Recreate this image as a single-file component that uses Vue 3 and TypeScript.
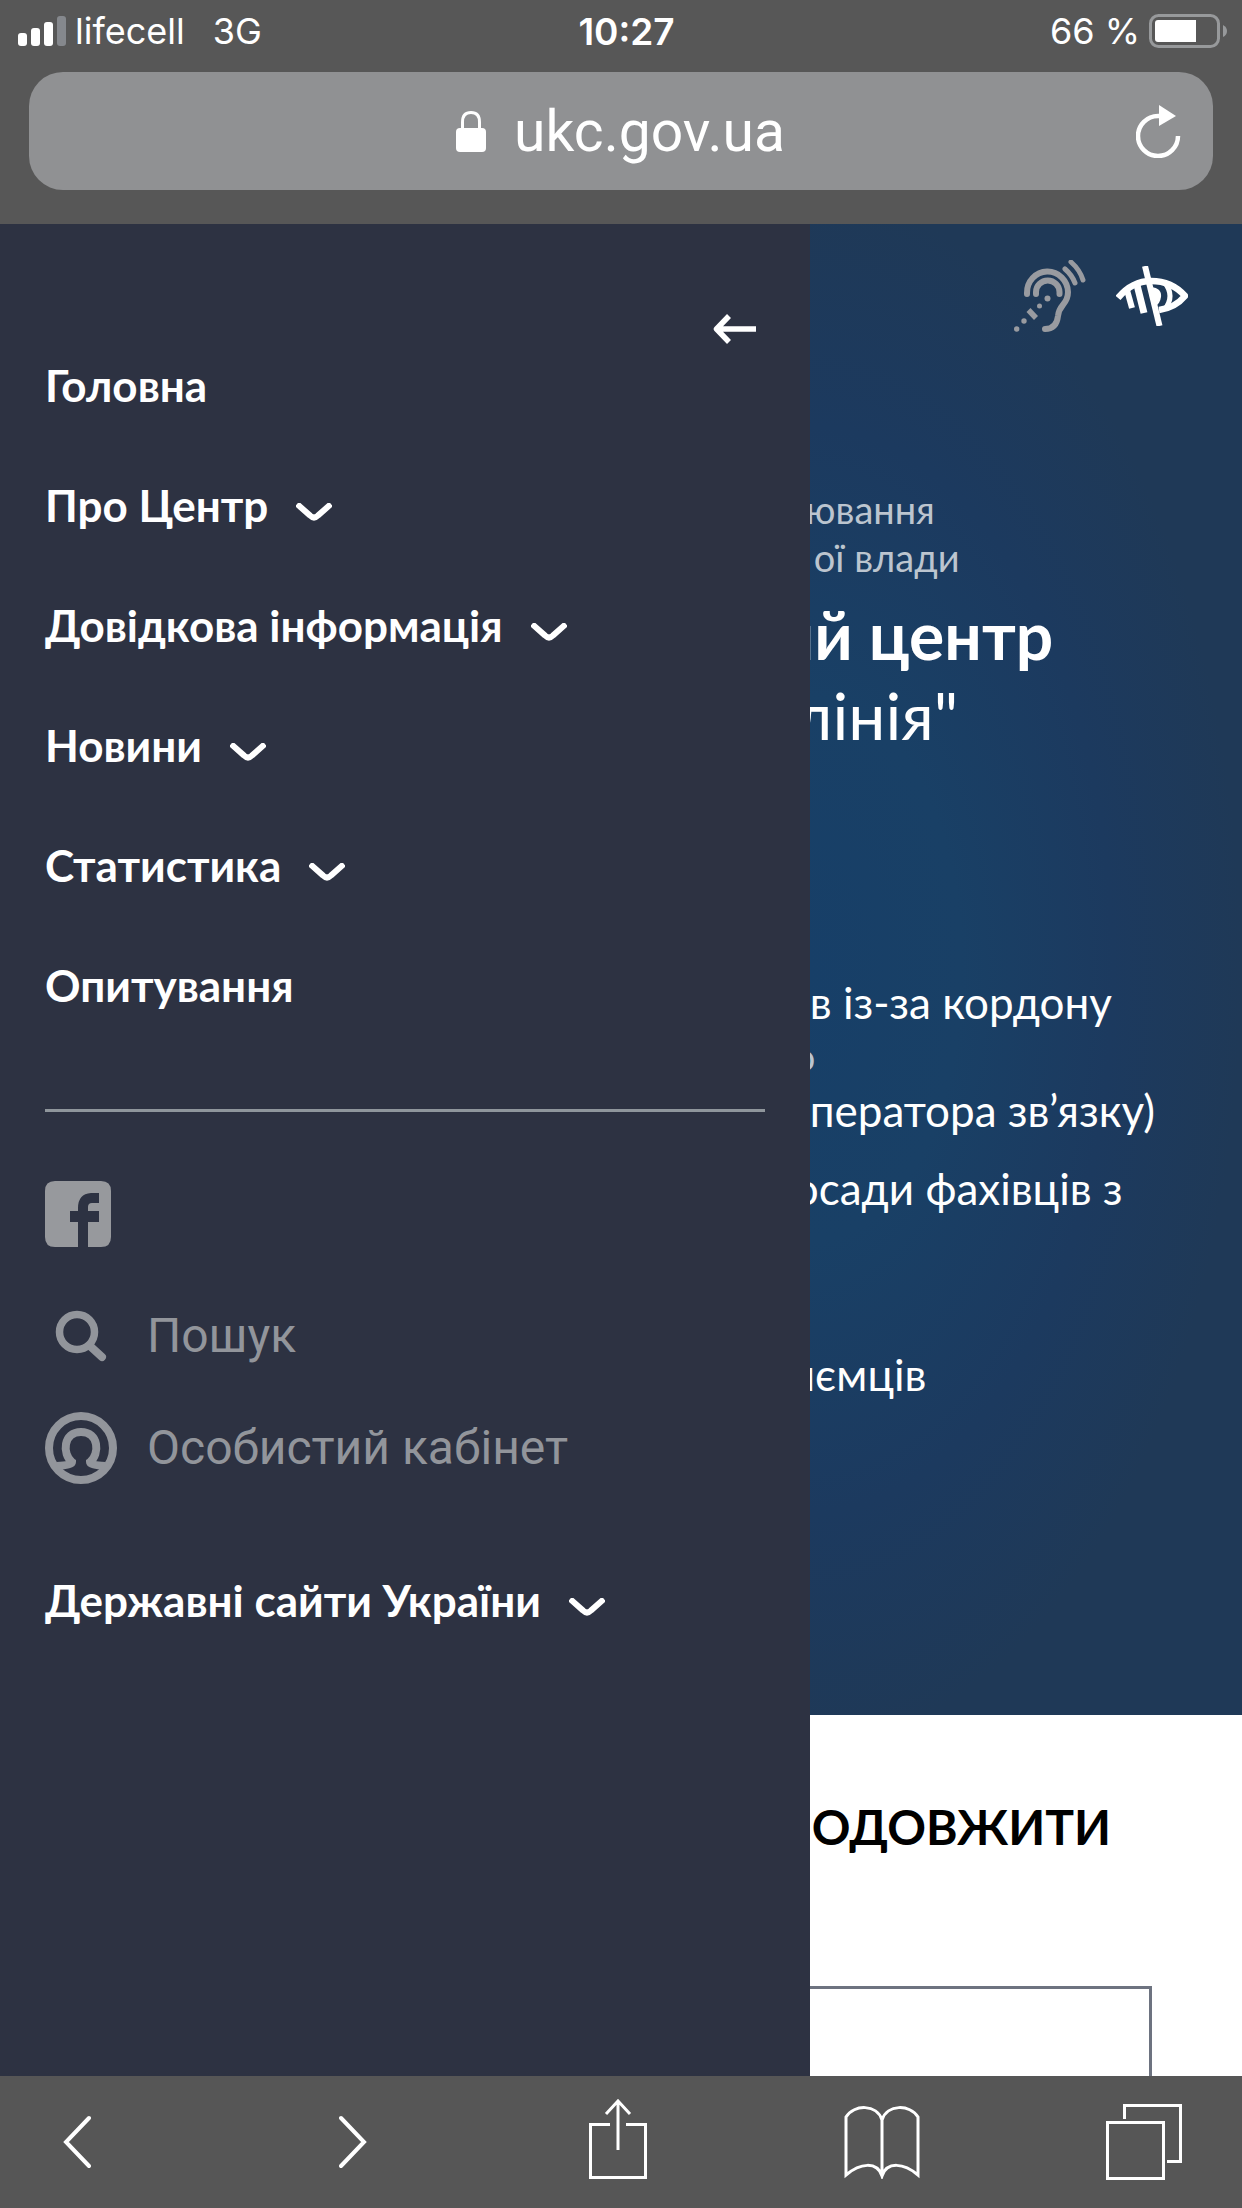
<script setup lang="ts">
interface MenuItem {
  label: string
  expandable: boolean
}

const menu: MenuItem[] = [
  { label: 'Головна', expandable: false },
  { label: 'Про Центр', expandable: true },
  { label: 'Довідкова інформація', expandable: true },
  { label: 'Новини', expandable: true },
  { label: 'Статистика', expandable: true },
  { label: 'Опитування', expandable: false },
]
</script>

<template>
  <div class="screen">
    <header class="chrome">
      <div class="status">
        <div class="carrier">
          <svg width="48" height="30" viewBox="0 0 48 30" aria-hidden="true">
            <rect x="0" y="17" width="9" height="13" rx="3" fill="#fff" />
            <rect x="13" y="12" width="9" height="18" rx="3" fill="#fff" />
            <rect x="26" y="6" width="9" height="24" rx="3" fill="#fff" />
            <rect x="39" y="0" width="9" height="30" rx="3" fill="#85888d" />
          </svg>
          <span>lifecell</span>
          <span class="network">3G</span>
        </div>
        <time class="clock">10:27</time>
        <div class="power">
          <span>66 %</span>
          <svg width="78" height="34" viewBox="0 0 78 34" aria-hidden="true">
            <rect x="1.5" y="1.5" width="68" height="31" rx="8" fill="none" stroke="#97999b" stroke-width="3" />
            <path d="M9 6H47V28H9Q6 28 6 25V9Q6 6 9 6Z" fill="#fff" />
            <path d="M74 11Q78 13 78 17T74 23Z" fill="#97999b" />
          </svg>
        </div>
      </div>
      <div class="address">
        <div class="host">
          <svg width="30" height="41" viewBox="0 0 30 41" aria-hidden="true">
            <path d="M6.5 18V11Q6.5 1.500 15 1.500T23.500 11V18" fill="none" stroke="#fff" stroke-width="3" />
            <rect y="17" width="30" height="24" rx="4" fill="#fff" />
          </svg>
          <span>ukc.gov.ua</span>
        </div>
        <button class="reload" type="button" aria-label="Оновити">
          <svg width="46" height="54" viewBox="0 0 46 54">
            <path d="M42 32A20 20 0 1 1 22 12H25" fill="none" stroke="#fff" stroke-width="4.500" />
            <path d="M23 1L40 12L23 22Z" fill="#fff" />
          </svg>
        </button>
      </div>
    </header>

    <div class="viewport">
      <aside class="drawer">
        <button class="close" type="button" aria-label="Закрити меню">
          <svg width="43" height="30" viewBox="0 0 43 30">
            <path d="M43 15H4M16 2L3.500 15L16 28" fill="none" stroke="#fff" stroke-width="5.500" stroke-linejoin="round" />
          </svg>
        </button>
        <nav class="menu">
          <a v-for="item in menu" :key="item.label" class="entry" href="#">
            {{ item.label }}
            <svg v-if="item.expandable" class="chevron" viewBox="0 0 36 18" aria-hidden="true">
              <path d="M1 1L14 12.500Q18 16.500 22 12.500L35 1" />
            </svg>
          </a>
        </nav>
        <hr class="rule" />
        <a class="social" href="#" aria-label="Facebook">
          <svg width="66" height="66" viewBox="0 0 66 66">
            <path
              fill-rule="evenodd"
              d="M10 0H56Q66 0 66 10V56Q66 66 56 66H43V41H54V30H43V26Q43 22 47 22H54V12H46Q33 13 33 27V30H25V41H33V66H10Q0 66 0 56V10Q0 0 10 0Z"
              fill="#97999d"
            />
          </svg>
        </a>
        <div class="tools">
          <a class="tool" href="#">
            <svg width="72" height="72" viewBox="0 0 72 72" fill="none" stroke="#92959b" aria-hidden="true">
              <circle cx="32" cy="32" r="17.500" stroke-width="7.500" />
              <path d="M45 46L57 57" stroke-width="8" stroke-linecap="round" />
            </svg>
            Пошук
          </a>
          <a class="tool" href="#">
            <svg width="72" height="72" viewBox="0 0 72 72" fill="none" stroke="#92959b" stroke-width="8" aria-hidden="true">
              <circle cx="36" cy="36" r="32" />
              <path d="M12 54Q27 53 27 50C17 42 18 20 36 20S55 42 45 50Q45 53 60 54" />
            </svg>
            Особистий кабінет
          </a>
        </div>
        <a class="entry" href="#">
          Державні сайти України
          <svg class="chevron" viewBox="0 0 36 18" aria-hidden="true">
            <path d="M1 1L14 12.500Q18 16.500 22 12.500L35 1" />
          </svg>
        </a>
      </aside>

      <main class="page">
        <section class="hero">
          <div class="access">
            <button type="button" aria-label="Людям із порушенням слуху">
              <svg width="72" height="72" viewBox="0 0 72 72" fill="none" stroke="#999ba0" stroke-width="6" stroke-linecap="round">
                <path d="M13 34V33A20.500 21 0 0 1 54 32C54 45 45 44 44 56C43 65 38 69 31 69" />
                <path d="M22 34V32A11.700 11.500 0 0 1 45.500 32V34" />
                <path d="M51 9Q58 15 61 23M57 2Q66 10 69 20" stroke-width="5" />
                <path d="M14.500 50L22 58" stroke-width="5.500" stroke-linecap="butt" />
                <g fill="#999ba0" stroke="none">
                  <circle cx="33.500" cy="38.500" r="3" />
                  <circle cx="25.500" cy="46" r="2.500" />
                  <circle cx="10" cy="61" r="2.700" />
                  <circle cx="2.700" cy="69" r="2.700" />
                </g>
              </svg>
            </button>
            <button type="button" aria-label="Людям із порушенням зору">
              <svg width="72" height="60" viewBox="0 0 72 60" fill="none" stroke="#fff">
                <path d="M2 32Q16 15 35 15Q56 15 69 30Q59 42 43 44" stroke-width="6.500" stroke-linejoin="round" />
                <path d="M49 17Q59 30 49 43" stroke-width="5" />
                <path d="M35 21Q46 22 45 31Q44 38 39 40Z" fill="#fff" stroke="none" />
                <path d="M11 24L16 42" stroke-width="6" />
                <path d="M21 19L28 47" stroke-width="7" />
                <path d="M29 0L43.500 60" stroke-width="6" />
              </svg>
            </button>
          </div>
          <p class="caption"><span class="cut-xs">ювання</span><br />ої влади</p>
          <h1 class="title">
            <span class="cut-l">ий центр</span><br />
            <span class="subtitle cut-s">лінія"</span>
          </h1>
          <div class="notes">
            <p>в із-за кордону</p>
            <p class="minor"><span class="cut-s">о</span></p>
            <p>ператора зв’язку)</p>
            <p class="spaced"><span class="cut-s">осади фахівців з</span></p>
            <p class="last"><span class="cut-m">иємців</span></p>
          </div>
        </section>
        <section class="form">
          <h2>ОДОВЖИТИ</h2>
          <div class="panel"></div>
        </section>
      </main>
    </div>

    <footer class="toolbar">
      <button type="button" aria-label="Назад">
        <svg width="28" height="54" viewBox="0 0 28 54"><path d="M26 3L3 27L26 51" stroke-width="4" stroke-linecap="round" /></svg>
      </button>
      <button type="button" aria-label="Вперед">
        <svg width="28" height="54" viewBox="0 0 28 54"><path d="M2 3L25 27L2 51" stroke-width="4" stroke-linecap="round" /></svg>
      </button>
      <button type="button" aria-label="Поділитися">
        <svg width="58" height="86" viewBox="0 0 58 86"><path d="M21 25.500H1.500V78.500H56.500V25.500H37M29 51V3M17 15L29 2L41 15" /></svg>
      </button>
      <button type="button" aria-label="Закладки">
        <svg width="76" height="74" viewBox="0 0 76 74">
          <path d="M38 15C33 -1 10 -1 2 12V70C16 58 33 56 38 71C43 56 60 58 74 70V12C66 -1 43 -1 38 15V71" />
        </svg>
      </button>
      <button type="button" aria-label="Вкладки">
        <svg width="76" height="76" viewBox="0 0 76 76">
          <path d="M1.500 18.500H57.500V74.500H1.500ZM18.500 15V1.500H74.500V57.500H61" />
        </svg>
      </button>
    </footer>
  </div>
</template>

<style>
body {
  margin: 0;
}
</style>

<style scoped>
.screen {
  display: flex;
  flex-direction: column;
  min-height: 100vh;
  font-family: Lato, "Open Sans", sans-serif;
  color: #fff;
  background: #565656;
}

button {
  padding: 0;
  border: 0;
  background: none;
  color: inherit;
}

svg {
  display: block;
  flex: none;
}

a {
  color: inherit;
  text-decoration: none;
}

h1,
h2,
p {
  margin: 0;
}

.chrome {
  padding-bottom: 34px;
  background: #575757;
}

.status {
  display: grid;
  grid-template-columns: 1fr auto 1fr;
  align-items: center;
  height: 62px;
  padding: 0 15px 0 18px;
  font: 36px Inter, sans-serif;
}

.carrier,
.power {
  display: flex;
  align-items: center;
  gap: 9px;
}

.power {
  justify-content: flex-end;
}

.network {
  margin-left: 19px;
}

.clock {
  padding-left: 8px;
  font-size: 37px;
  font-weight: 600;
}

.address {
  display: flex;
  align-items: center;
  margin: 10px 29px 0;
  padding-right: 31px;
  height: 118px;
  border-radius: 34px;
  background: #909193;
}

.host {
  flex: 1;
  display: flex;
  justify-content: center;
  align-items: center;
  gap: 28px;
  padding-left: 76px;
  font: 57px Roboto, sans-serif;
}

.viewport {
  flex: 1;
  display: flex;
}

.drawer {
  flex: none;
  box-sizing: border-box;
  width: 65.2%;
  padding: 90px 45px;
  background: #2d3242;
}

.close {
  display: block;
  margin: 0 9px 13px auto;
}

.menu {
  display: flex;
  flex-direction: column;
  gap: 64px;
}

.entry {
  display: flex;
  align-items: center;
  gap: 28px;
  font-size: 44px;
  font-weight: 700;
  line-height: 56px;
}

.chevron {
  width: 36px;
  height: 18px;
  margin-top: 14px;
  fill: none;
  stroke: #fff;
  stroke-width: 6;
}

.rule {
  height: 3px;
  margin: 96px 0 69px;
  border: 0;
  background: #8f969c;
}

.social {
  display: block;
  width: 66px;
}

.tools {
  display: grid;
  gap: 40px;
  margin: 53px 0 88px;
}

.tool {
  display: flex;
  align-items: center;
  gap: 30px;
  font: 48px/72px Roboto, sans-serif;
  color: #92959b;
}

.page {
  flex: 1;
  min-width: 0;
  display: flex;
  flex-direction: column;
  overflow: hidden;
  white-space: nowrap;
  background: #fff;
}

.hero {
  padding: 36px 0 314px;
  background: radial-gradient(ellipse 100% 52% at 0 50%, #173f68 0%, #194066 35%, #1c3a5f 70%, #1f3957 100%);
}

.access {
  display: flex;
  justify-content: flex-end;
  align-items: center;
  gap: 30px;
  padding-right: 54px;
}

.caption {
  margin-top: 153px;
  padding-left: 4px;
  font-size: 38px;
  line-height: 48px;
  color: #bcc5cf;
}

.title {
  margin-top: 14px;
  font-size: 66px;
  font-weight: 700;
  line-height: 80px;
}

.subtitle {
  font-weight: 400;
}

.cut-xs {
  margin-left: -8px;
}

.cut-s {
  margin-left: -16px;
}

.cut-m {
  margin-left: -20px;
}

.cut-l {
  margin-left: -34px;
}

.notes {
  margin-top: 220px;
  font-size: 44px;
  line-height: 54px;
}

.minor {
  font-size: 38px;
  color: #bcc5cf;
}

.spaced {
  margin-top: 24px;
}

.last {
  margin-top: 132px;
}

.form {
  flex: 1;
  display: flex;
  flex-direction: column;
  color: #000;
}

.form h2 {
  margin: 84px 0 131px;
  padding-left: 2px;
  font-size: 48px;
  font-weight: 700;
  line-height: 56px;
}

.panel {
  flex: 1;
  margin-right: 90px;
  border: solid #6d7380;
  border-width: 3px 3px 0 0;
}

.toolbar {
  display: grid;
  grid-template-columns: 276fr 251fr 255fr 262fr auto;
  align-items: center;
  justify-items: start;
  height: 132px;
  padding: 0 60px 0 63px;
  background: #565656;
}

.toolbar svg {
  fill: none;
  stroke: #fff;
  stroke-width: 3;
}
</style>
